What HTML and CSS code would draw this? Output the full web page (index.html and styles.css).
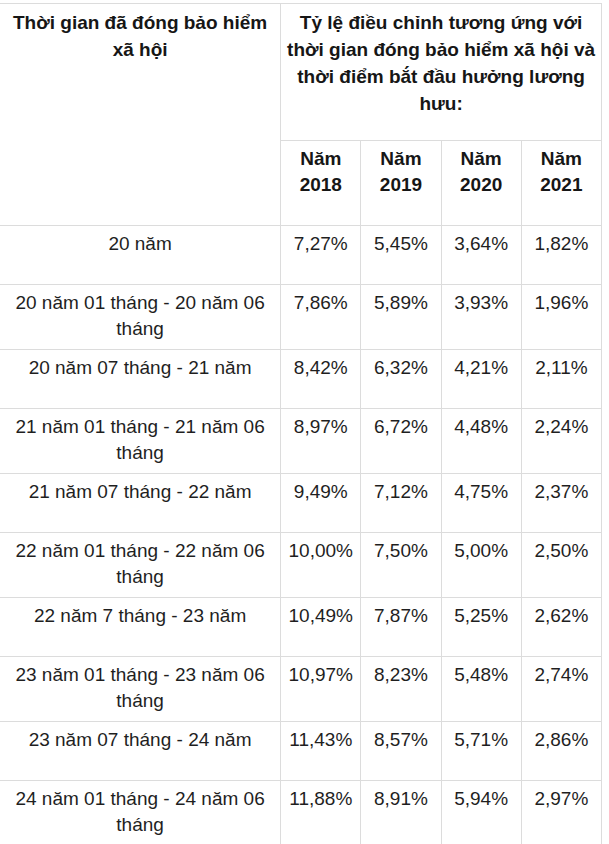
FILE: index.html
```html
<!DOCTYPE html>
<html lang="vi">
<head>
<meta charset="utf-8">
<title>Tỷ lệ điều chỉnh</title>
<link rel="stylesheet" href="styles.css">
</head>
<body>
<table class="rates">
  <colgroup>
    <col class="c-time">
    <col class="c-year">
    <col class="c-year">
    <col class="c-year">
    <col class="c-year">
  </colgroup>
  <thead>
    <tr class="h1">
      <th rowspan="2" class="first">Thời gian đã đóng bảo hiểm xã hội</th>
      <th colspan="4">Tỷ lệ điều chỉnh tương ứng với thời gian đóng bảo hiểm xã hội và thời điểm bắt đầu hưởng lương hưu:</th>
    </tr>
    <tr class="h2">
      <th>Năm 2018</th>
      <th>Năm 2019</th>
      <th>Năm 2020</th>
      <th>Năm 2021</th>
    </tr>
  </thead>
  <tbody>
    <tr class="one"><td class="first">20 năm</td><td>7,27%</td><td>5,45%</td><td>3,64%</td><td>1,82%</td></tr>
    <tr class="two"><td class="first">20 năm 01 tháng - 20 năm 06 tháng</td><td>7,86%</td><td>5,89%</td><td>3,93%</td><td>1,96%</td></tr>
    <tr class="one"><td class="first">20 năm 07 tháng - 21 năm</td><td>8,42%</td><td>6,32%</td><td>4,21%</td><td>2,11%</td></tr>
    <tr class="two"><td class="first">21 năm 01 tháng - 21 năm 06 tháng</td><td>8,97%</td><td>6,72%</td><td>4,48%</td><td>2,24%</td></tr>
    <tr class="one"><td class="first">21 năm 07 tháng - 22 năm</td><td>9,49%</td><td>7,12%</td><td>4,75%</td><td>2,37%</td></tr>
    <tr class="two"><td class="first">22 năm 01 tháng - 22 năm 06 tháng</td><td>10,00%</td><td>7,50%</td><td>5,00%</td><td>2,50%</td></tr>
    <tr class="one"><td class="first">22 năm 7 tháng - 23 năm</td><td>10,49%</td><td>7,87%</td><td>5,25%</td><td>2,62%</td></tr>
    <tr class="two"><td class="first">23 năm 01 tháng - 23 năm 06 tháng</td><td>10,97%</td><td>8,23%</td><td>5,48%</td><td>2,74%</td></tr>
    <tr class="one"><td class="first">23 năm 07 tháng - 24 năm</td><td>11,43%</td><td>8,57%</td><td>5,71%</td><td>2,86%</td></tr>
    <tr class="two"><td class="first">24 năm 01 tháng - 24 năm 06 tháng</td><td>11,88%</td><td>8,91%</td><td>5,94%</td><td>2,97%</td></tr>
  </tbody>
</table>
</body>
</html>
```

FILE: styles.css
```css
html, body {
  margin: 0;
  padding: 0;
  background: #ffffff;
}

body {
  font-family: "Liberation Sans", Arial, sans-serif;
  font-size: 19px;
  color: #1f1f1f;
}

.rates {
  margin-top: 3px;
  border-collapse: collapse;
  table-layout: fixed;
  width: 602px;
}

.c-time { width: 280px; }
.c-year { width: 80px; }

.rates th,
.rates td {
  border: 1px solid #dcdcdc;
  padding: 5px 5px 7px;
  text-align: center;
  vertical-align: top;
  line-height: 26px;
}

.rates .first {
  border-left: none;
}

.rates th {
  font-weight: bold;
  color: #161616;
}

.h1 th {
  line-height: 27px;
  height: 124px;
}

.h2 th {
  height: 72px;
}

.one td {
  height: 46px;
}
```
